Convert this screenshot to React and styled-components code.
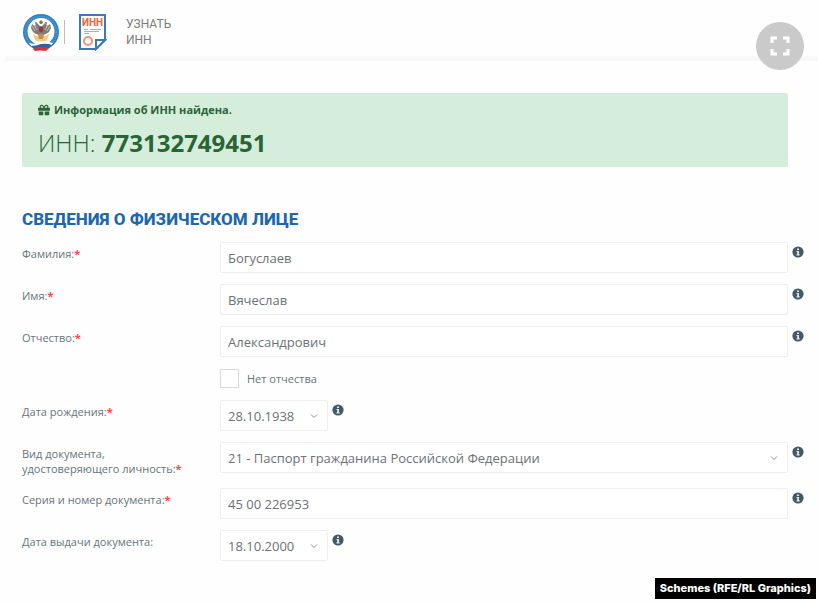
import { useState } from "react";
import styled, { createGlobalStyle } from "styled-components";
import { FaGift } from "react-icons/fa";

const GlobalStyle = createGlobalStyle`
  * {
    box-sizing: border-box;
  }

  body {
    margin: 0;
    background-color: #fefefe;
    color: #66757b;
    font-family: "Open Sans", "Noto Sans", sans-serif;
    font-size: 11px;
    line-height: 15px;
  }
`;

const documentTypes = [
  "21 - Паспорт гражданина Российской Федерации",
  "10 - Паспорт иностранного гражданина",
];

function Emblem() {
  return (
    <svg width="38" height="39" viewBox="0 0 38 39" aria-hidden="true">
      <circle cx="19" cy="19" r="18" fill="#2f7fc1" />
      <circle
        cx="19"
        cy="19"
        r="15.5"
        fill="none"
        stroke="#5f9fd2"
        strokeWidth="2"
        strokeDasharray="1 1"
      />
      <circle cx="19" cy="18.5" r="13.5" fill="#fff" />
      <path
        d="M18 13 L15 10 L13 12 L14 14 L10 11 L9 15 L11 19 L14 21 L17 22 L19 24 L21 22 L24 21 L27 19 L29 15 L28 11 L24 14 L25 12 L23 10 L20 13 Z"
        fill="#827b79"
      />
      <path d="M10 13 L13 18 M12 12 L15 17 M28 13 L25 18 M26 12 L23 17" stroke="#c3bdb8" />
      <path d="M19 7 L21 9 L20 11 H18 L17 9 Z" fill="#a06a50" />
      <circle cx="14" cy="10" r="1" fill="#a06a50" />
      <circle cx="24" cy="10" r="1" fill="#a06a50" />
      <path d="M17 14 H21 V18 L19 20 L17 18 Z" fill="#9a3a38" />
      <path d="M11 21 Q19 26 27 21 L25 27 Q19 30 13 27 Z" fill="#f0cd85" />
      <path d="M16 22 L19 20 L22 22 L21 26 H17 Z" fill="#b99055" />
      <path d="M7 30 Q13 32 19 29 Q26 28 31 30 L28 34 Q20 31 11 35 Z" fill="#fff" />
      <path d="M9 33 Q14 33 19 31 Q25 30 30 32 L27 35 Q19 33 12 36 Z" fill="#2c5fb0" />
      <path d="M11 36 Q15 33 19 34 Q23 33 27 35 L24 38 Q18 37 13 38 Z" fill="#d8323c" />
    </svg>
  );
}

function InnLogo() {
  return (
    <svg width="29" height="38" viewBox="0 0 29 38" aria-hidden="true">
      <path d="M2 2 H27 V27 L18 36 H2 Z" fill="#fff" stroke="#3a7abb" strokeWidth="2" />
      <path d="M18 36 V27 H27 Z" fill="#fff" stroke="#3a7abb" strokeWidth="2" />
      <LogoText x="14.5" y="13" textAnchor="middle">
        ИНН
      </LogoText>
      <path d="M6 16.5 H10 M12 16.5 H23 M6 18.5 H21 M6 20.5 H11" stroke="#8fb4d8" />
      <circle cx="10" cy="28" r="4" fill="none" stroke="#f29474" strokeWidth="2" />
    </svg>
  );
}

function Info({ label }) {
  return (
    <InfoButton type="button" aria-label={`Подсказка: ${label}`}>
      <svg width="12" height="12" viewBox="0 0 12 12">
        <circle cx="6" cy="6" r="5.6" fill="#425a65" />
        <path d="M5 2.5 H7 V4 H5 Z M4.5 5 H7 V8.3 H7.7 V9.5 H4.5 V8.3 H5.2 V6.1 H4.5 Z" fill="#dfe5e8" />
      </svg>
    </InfoButton>
  );
}

function Select({ id, options, narrow }) {
  return (
    <SelectBox $narrow={narrow}>
      <SelectInput id={id}>
        {options.map((option) => (
          <option key={option}>{option}</option>
        ))}
      </SelectInput>
      <Chevron width="8" height="6" viewBox="0 0 8 6" aria-hidden="true">
        <path d="M1 1.5 L4 4.5 L7 1.5" fill="none" stroke="#8b9296" />
      </Chevron>
    </SelectBox>
  );
}

function Field({ id, label, required, info, children }) {
  return (
    <Row>
      <Label htmlFor={id}>
        {label}
        {required && <Star>*</Star>}
      </Label>
      <Control>
        {children}
        {info && <Info label={label} />}
      </Control>
    </Row>
  );
}

export default function App() {
  const [person, setPerson] = useState({
    surname: "Богуслаев",
    name: "Вячеслав",
    patronymic: "Александрович",
    number: "45 00 226953",
  });
  const [noPatronymic, setNoPatronymic] = useState(false);

  const bind = (key) => ({
    id: key,
    type: "text",
    value: person[key],
    onChange: (e) => setPerson({ ...person, [key]: e.target.value }),
  });

  return (
    <Page>
      <GlobalStyle />
      <Header>
        <Emblem />
        <Divider />
        <InnLogo />
        <ServiceName>
          УЗНАТЬ
          <br />
          ИНН
        </ServiceName>
      </Header>
      <FullscreenButton type="button" aria-label="Во весь экран">
        <svg width="20" height="20" viewBox="0 0 20 20">
          <path
            d="M2 7 V2 H7 M13 2 H18 V7 M18 13 V18 H13 M7 18 H2 V13"
            fill="none"
            stroke="#fff"
            strokeWidth="3"
          />
        </svg>
      </FullscreenButton>

      <Main>
        <Alert role="status">
          <AlertTitle>
            <FaGift size={12} />
            Информация об ИНН найдена.
          </AlertTitle>
          <AlertNumber>
            ИНН: <strong>773132749451</strong>
          </AlertNumber>
        </Alert>

        <Title>Сведения о физическом лице</Title>

        <Form onSubmit={(e) => e.preventDefault()}>
          <Field id="surname" label="Фамилия:" required info>
            <TextInput {...bind("surname")} />
          </Field>
          <Field id="name" label="Имя:" required info>
            <TextInput {...bind("name")} />
          </Field>
          <Field id="patronymic" label="Отчество:" required info>
            <TextInput {...bind("patronymic")} disabled={noPatronymic} />
          </Field>
          <Row>
            <CheckLabel>
              <Checkbox
                type="checkbox"
                checked={noPatronymic}
                onChange={(e) => setNoPatronymic(e.target.checked)}
              />
              Нет отчества
            </CheckLabel>
          </Row>
          <Field id="birthday" label="Дата рождения:" required info>
            <Select id="birthday" options={["28.10.1938"]} narrow />
          </Field>
          <Field
            id="docType"
            label="Вид документа, удостоверяющего личность:"
            required
            info
          >
            <Select id="docType" options={documentTypes} />
          </Field>
          <Field id="number" label="Серия и номер документа:" required info>
            <TextInput {...bind("number")} />
          </Field>
          <Field id="issued" label="Дата выдачи документа:" info>
            <Select id="issued" options={["18.10.2000"]} narrow />
          </Field>
        </Form>
      </Main>

      <Credit>Schemes (RFE/RL Graphics)</Credit>
    </Page>
  );
}

const Page = styled.div`
  position: relative;
  display: flex;
  flex-direction: column;
`;

const Header = styled.header`
  display: flex;
  align-items: center;
  height: 61px;
  margin-left: 5px;
  padding: 8px 17px 0;
  border-bottom: 5px solid #f8f8f8;
`;

const Divider = styled.span`
  width: 1px;
  height: 24px;
  margin: 0 13px 0 4px;
  background-color: #bdbdbd;
`;

const LogoText = styled.text`
  fill: #ee6a3c;
  font-family: Roboto, sans-serif;
  font-size: 10px;
  font-weight: 800;
`;

const ServiceName = styled.p`
  margin: 0 0 0 19px;
  color: #7c7c7c;
  font-family: Roboto, sans-serif;
  font-size: 12px;
  line-height: 16px;
`;

const FullscreenButton = styled.button`
  position: absolute;
  top: 22px;
  right: 14px;
  display: flex;
  align-items: center;
  justify-content: center;
  width: 48px;
  height: 48px;
  padding: 0;
  border: none;
  border-radius: 50%;
  background-color: #cacaca;
  cursor: pointer;
`;

const Main = styled.main`
  padding: 32px 14px 0 22px;
`;

const Alert = styled.div`
  margin-right: 16px;
  padding: 9px 16px 8px;
  border-radius: 2px;
  background-color: #d5eedb;
  color: #2a6336;
`;

const AlertTitle = styled.p`
  display: flex;
  align-items: center;
  gap: 4px;
  margin: 0;
  font-weight: 700;
`;

const AlertNumber = styled.p`
  margin: 9px 0 0;
  font-size: 24px;
  font-weight: 300;
  line-height: 33px;

  strong {
    font-weight: 700;
  }
`;

const Title = styled.h1`
  margin: 40px 0 11px;
  color: #1c67b0;
  font-family: Roboto, sans-serif;
  font-size: 17px;
  font-weight: 800;
  line-height: 24px;
  text-transform: uppercase;
`;

const Form = styled.form`
  display: flex;
  flex-direction: column;
  gap: 11px;
`;

const Row = styled.div`
  display: grid;
  grid-template-columns: 198px 1fr;
`;

const Label = styled.label`
  padding: 4px 24px 1px 0;
`;

const Star = styled.span`
  color: #fb4a46;
  font-weight: 700;
`;

const Control = styled.div`
  display: flex;
  align-items: flex-start;
  gap: 4px;
`;

const TextInput = styled.input`
  flex: 1;
  min-width: 0;
  height: 31px;
  padding: 0 7px;
  border: 1px solid #eeeeee;
  border-radius: 2px;
  background-color: #fff;
  color: #6c7175;
  font-family: inherit;
  font-size: 13px;
`;

const SelectBox = styled.div`
  position: relative;
  flex: ${(props) => (props.$narrow ? "0 0 108px" : "1")};
  min-width: 0;
`;

const SelectInput = styled.select`
  display: block;
  width: 100%;
  height: 31px;
  padding: 0 24px 0 7px;
  border: 1px solid #eeeeee;
  border-radius: 2px;
  background-color: #fff;
  color: #6c7175;
  font-family: inherit;
  font-size: 13px;
  appearance: none;
`;

const Chevron = styled.svg`
  position: absolute;
  top: 13px;
  right: 10px;
  pointer-events: none;
`;

const InfoButton = styled.button`
  display: flex;
  margin: 4px 0 0;
  padding: 0;
  border: none;
  background: none;
  cursor: pointer;
`;

const CheckLabel = styled.label`
  grid-column: 2;
  display: flex;
  align-items: center;
  justify-self: start;
  gap: 8px;
  height: 21px;
`;

const Checkbox = styled.input`
  width: 19px;
  height: 19px;
  margin: 0;
  border: 1px solid #d9d9d9;
  background-color: #fff;
  appearance: none;

  &:checked {
    background-color: #1c67b0;
  }
`;

const Credit = styled.footer`
  align-self: flex-end;
  margin: 17px 2px 3px 0;
  padding: 3px 5px;
  background-color: #000;
  color: #fff;
  font-family: Inter, "Liberation Sans", sans-serif;
  font-size: 11px;
  font-weight: 800;
`;
